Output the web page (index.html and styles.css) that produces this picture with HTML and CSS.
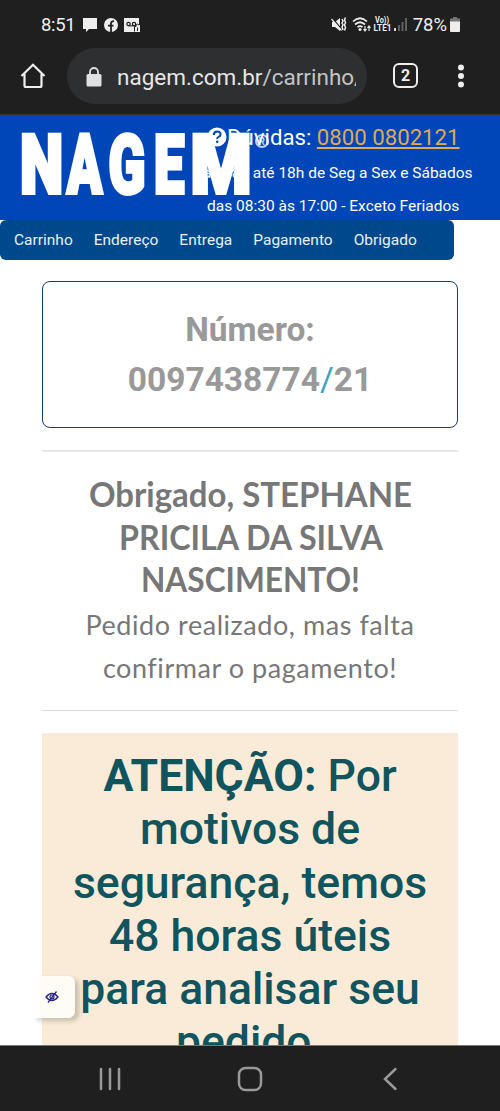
FILE: index.html
```html
<!DOCTYPE html>
<html lang="pt-BR">
<head>
  <meta charset="UTF-8">
  <meta name="viewport" content="width=device-width, initial-scale=1.0">
  <title>Nagem - Carrinho</title>
  <link rel="stylesheet" href="styles.css">
</head>
<body>
  <div class="phone">
    <div class="status-bar">
      <span class="clock">8:51</span>
      <svg class="notifications" width="60" height="16" viewBox="0 0 60 16">
        <path d="M1 1h14v11H7l-3 3v-3H1z" fill="#eee"/>
        <circle cx="29" cy="8" r="7" fill="#eee"/>
        <path d="M29 15V6.500q0-2.500 3-2.300M26 8.700h5.500" fill="none" stroke="#1f1f1f" stroke-width="1.800"/>
        <path d="M42 1h15v7h1v7H42z" fill="#eee"/>
        <circle cx="46.500" cy="7" r="1.700" fill="none" stroke="#1f1f1f" stroke-width="1.200"/>
        <circle cx="52" cy="7" r="1.700" fill="none" stroke="#1f1f1f" stroke-width="1.200"/>
        <path d="M46.500 8.900h6M52.500 14.500V9.500h1.500V8q1.500-1.500 3 0" fill="none" stroke="#1f1f1f" stroke-width="1"/>
        <path d="M55.500 10.500v3.500" stroke="#1f1f1f" stroke-width="1"/>
      </svg>
      <svg class="signals" width="80" height="18" viewBox="0 0 80 18">
        <path d="M0 6h3l5-4v13l-5-4H0z" fill="#eee"/>
        <path d="M0 2l11 13" stroke="#1f1f1f" stroke-width="1.800"/>
        <path d="M-.5 3l10 11.500" stroke="#eee" stroke-width="1.200"/>
        <path d="M10 3l1 2-1 2 1 2-1 2 1 3M13.500 1.500l-1 2.500 1 2.500-1 2.500 1 2.500-1 3" fill="none" stroke="#eee" stroke-width="1.500"/>
        <path d="M21 5.500q7-6.500 14 0M23 8.500q5-4.500 10 0M25.500 11.200q2.500-2.200 5 0" fill="none" stroke="#eee" stroke-width="1.700"/>
        <circle cx="28" cy="13.500" r="1.500" fill="#eee"/>
        <path d="M33 10v5M31.500 13l1.500 2 1.500-2M37 15v-5M35.500 12l1.500-2 1.500 2" fill="none" stroke="#eee" stroke-width="1.100"/>
        <text x="43" y="7" class="volte" textLength="14" lengthAdjust="spacingAndGlyphs">Vo))</text>
        <text x="41.500" y="15" class="volte" textLength="18" lengthAdjust="spacingAndGlyphs">LTE1</text>
        <path d="M63 12v3" stroke="#eee" stroke-width="1.800"/>
        <path d="M67 9v6M70.500 6v9M74 2v13" stroke="#666" stroke-width="1.800"/>
      </svg>
      <span class="percent">78%</span>
      <svg class="battery" width="10" height="16" viewBox="0 0 10 16">
        <path d="M3 0h4v1.500h3V5H0V1.500h3z" fill="#777"/>
        <path d="M0 4.500h10V14q0 1-1 1H1q-1 0-1-1z" fill="#eee"/>
      </svg>
    </div>

    <div class="browser-bar">
      <svg class="home" width="26" height="26" viewBox="0 0 26 26">
        <path d="M1.500 13L13 1.800 24.500 13M4.500 11v11.500q0 1.500 1.500 1.500h14q1.500 0 1.500-1.500V11" fill="none" stroke="#eee" stroke-width="2.200"/>
      </svg>
      <div class="address">
        <svg width="16" height="20" viewBox="0 0 16 20">
          <path d="M4 8V5a4 4 0 0 1 8 0v3" fill="none" stroke="#e0e0e0" stroke-width="1.800"/>
          <rect x="0.500" y="7" width="15" height="12.500" rx="1.500" fill="#e0e0e0"/>
        </svg>
        <span class="url">nagem.com.br<span class="path">/carrinho/</span></span>
      </div>
      <span class="tabs">2</span>
      <svg class="more" width="6" height="24" viewBox="0 0 6 24">
        <g fill="#eee"><circle cx="3" cy="3.500" r="3"/><circle cx="3" cy="12" r="3"/><circle cx="3" cy="20.500" r="3"/></g>
      </svg>
    </div>

    <div class="page">
      <header class="header">
        <svg class="logo" width="260" height="80" viewBox="0 0 260 80">
          <g class="logo-text">
            <text transform="translate(0 73) scale(.75 1)">N</text>
            <text transform="translate(47 73) scale(.63 1)">A</text>
            <text transform="translate(88.500 73) scale(.66 1)">G</text>
            <text transform="translate(134 73) scale(.66 1)">E</text>
            <text class="logo-m" transform="translate(170.500 73) scale(.85 1)">M</text>
          </g>
          <circle cx="242" cy="21" r="6" fill="none" stroke="#b9d0f4" stroke-width="2"/>
          <text x="238.500" y="25" class="registered">R</text>
        </svg>
        <div class="contact">
          <p class="phone-line">
            <svg width="20" height="20" viewBox="0 0 20 20">
              <circle cx="10" cy="10" r="9.500" fill="#fff"/>
              <path d="M6.800 8q0-3.500 3.400-3.500T13.500 7.500q0 1.500-1.800 2.400T10.200 12" fill="none" stroke="#0046b8" stroke-width="2"/>
              <circle cx="10.200" cy="14.800" r="1.300" fill="#0046b8"/>
            </svg><span class="doubts">Dúvidas: <a href="#">0800 0802121</a></span>
          </p>
          <p class="hours hours-week">das 08h até 18h de Seg a Sex e Sábados</p>
          <p class="hours">das 08:30 às 17:00 - Exceto Feriados</p>
        </div>
      </header>

      <nav class="steps">
        <span>Carrinho</span>
        <span>Endereço</span>
        <span>Entrega</span>
        <span>Pagamento</span>
        <span>Obrigado</span>
      </nav>

      <main class="content">
        <div class="order">Número:<br>0097438774<span class="slash">/</span>21</div>
        <div class="thanks">
          <h1>
            <svg class="fit" width="416" height="128" viewBox="0 0 416 128">
              <text x="47" y="34" textLength="323" lengthAdjust="spacingAndGlyphs">Obrigado, STEPHANE</text>
              <text x="77" y="77" textLength="264" lengthAdjust="spacingAndGlyphs">PRICILA DA SILVA</text>
              <text x="99" y="119" textLength="219" lengthAdjust="spacingAndGlyphs">NASCIMENTO!</text>
            </svg>
          </h1>
          <p>Pedido realizado, mas falta<br><span class="confirm">confirmar o pagamento!</span></p>
        </div>
        <div class="warning"><b>ATENÇÃO:</b> Por<br>motivos de<br>segurança, temos<br>48 horas úteis<br>para analisar seu<br>pedido.</div>
      </main>

      <div class="access">
        <svg width="14" height="12" viewBox="0 0 14 12">
          <path d="M1 6q6-7 12 0-6 7-12 0zM3 11.500L11.500.500" fill="none" stroke="#2b2688" stroke-width="1.300"/>
          <circle cx="7" cy="6" r="2" fill="none" stroke="#2b2688" stroke-width="1.200"/>
        </svg>
      </div>
    </div>

    <div class="nav-bar">
      <svg width="24" height="24" viewBox="0 0 24 24"><path d="M3 2v20M12 2v20M21 2v20"/></svg>
      <svg width="26" height="26" viewBox="0 0 26 26"><rect x="2" y="2" width="22" height="22" rx="6.500"/></svg>
      <svg width="24" height="24" viewBox="0 0 24 24"><path d="M17.500 2L7 12l10.500 10"/></svg>
    </div>
  </div>
</body>
</html>
```

FILE: styles.css
```css
* {
  box-sizing: border-box;
}

body {
  margin: 0;
  font-family: Roboto, sans-serif;
  background: #fff;
}

.phone {
  width: 500px;
  height: 1111px;
  display: flex;
  flex-direction: column;
  overflow: hidden;
}

.status-bar {
  height: 48px;
  flex: none;
  display: flex;
  align-items: center;
  padding: 1px 40px 0 41px;
  background: #1f1f1f;
  color: #eee;
  font-size: 18.500px;
}

.clock {
  letter-spacing: -0.3px;
}

.notifications {
  margin-left: 7px;
}

.signals {
  margin-left: auto;
  overflow: visible;
}

.volte {
  fill: #eee;
  font-size: 8.500px;
  font-weight: bold;
}

.percent {
  margin-left: 1px;
}

.battery {
  margin-left: 3px;
}

.browser-bar {
  height: 67px;
  flex: none;
  display: flex;
  align-items: center;
  padding: 0 36px 11px 20px;
  background: #1f1f1f;
  border-bottom: 1px solid #333;
}

.address {
  width: 300px;
  height: 56px;
  margin-left: 21px;
  padding: 2px 11px 0 19px;
  display: flex;
  align-items: center;
  gap: 15px;
  border-radius: 28px;
  background: #2e2f31;
}

.address svg {
  flex: none;
}

.url {
  width: 239px;
  overflow: hidden;
  white-space: nowrap;
  color: #e6e6e6;
  font-size: 22.500px;
}

.path {
  color: #c4c4c4;
}

.tabs {
  width: 25px;
  height: 25px;
  margin-left: 26px;
  border: 2.500px solid #eee;
  border-radius: 6px;
  color: #eee;
  font-size: 16px;
  font-weight: bold;
  line-height: 22px;
  text-align: center;
}

.more {
  margin-left: auto;
}

.page {
  position: relative;
  height: 930px;
  flex: none;
  overflow: hidden;
  background: #fff;
}

.header {
  position: relative;
  height: 105px;
  padding: 11px 0 0 207px;
  background: #0046b8;
  color: #fff;
  white-space: nowrap;
}

.header p {
  margin: 0;
}

.contact {
  position: relative;
}

.phone-line {
  display: flex;
  align-items: center;
  height: 22px;
  font-size: 22.200px;
}

.doubts a {
  color: #deaa53;
  text-decoration-thickness: 1.500px;
  text-underline-offset: 2px;
}

.hours {
  height: 33px;
  font-size: 15.500px;
  line-height: 34px;
}

.header .hours-week {
  margin-top: 8px;
  margin-left: -13px;
}

.logo {
  position: absolute;
  left: 20px;
  top: 5px;
}

.logo-text {
  fill: #fff;
  stroke: #fff;
  stroke-width: 4px;
  font-size: 82px;
  font-weight: 900;
}

.logo-m {
  stroke-width: 4px;
}

.registered {
  fill: #b9d0f4;
  font-size: 10px;
  font-weight: bold;
}

.steps {
  width: 454px;
  height: 40px;
  padding: 0 14px;
  display: flex;
  align-items: center;
  gap: 21px;
  border-radius: 6px;
  background: #00488c;
  color: #e8f1fa;
  font-size: 15.500px;
}

.content {
  padding: 21px 42px 0 42px;
  text-align: center;
}

.order {
  height: 147px;
  padding-top: 23px;
  border: 1.500px solid #153f6c;
  border-radius: 8px;
  color: #999;
  font-size: 33.500px;
  font-weight: bold;
  line-height: 50px;
}

.slash {
  color: #3ba3c4;
  font-weight: normal;
}

.thanks {
  height: 261px;
  margin-top: 22px;
  padding-top: 21px;
  border-top: 2px solid #e8e8e8;
  border-bottom: 1px solid #ddd;
  color: #777;
}

.thanks h1 {
  height: 130px;
  margin: 0;
}

.fit {
  display: block;
  fill: #777;
  font-family: Lato, sans-serif;
  font-size: 34px;
  font-weight: bold;
}

.thanks p {
  margin: 0;
  font-family: Lato, sans-serif;
  font-size: 27px;
  letter-spacing: 0.55px;
  line-height: 43px;
}

.warning {
  height: 330px;
  margin-top: 22px;
  padding-top: 17px;
  background: #f9ebd7;
  color: #10545d;
  font-size: 44.500px;
  font-weight: 500;
  line-height: 53.300px;
  white-space: nowrap;
}

.access {
  position: absolute;
  left: 33px;
  top: 861px;
  width: 42px;
  height: 42px;
  padding: 15px 0 0 12px;
  border-radius: 0 7px 7px 0;
  background: linear-gradient(90deg, #fff, #fffbf5 30%);
  box-shadow: 4px 3px 5px rgba(0, 0, 0, 0.2);
}

.access svg {
  display: block;
}

.nav-bar {
  flex: 1;
  display: flex;
  align-items: center;
  justify-content: space-between;
  padding: 0 98px;
  background: #1f1f1f;
  border-top: 1px solid #777;
}

.nav-bar svg {
  fill: none;
  stroke: #999;
  stroke-width: 2.500px;
  stroke-linecap: round;
}
```
